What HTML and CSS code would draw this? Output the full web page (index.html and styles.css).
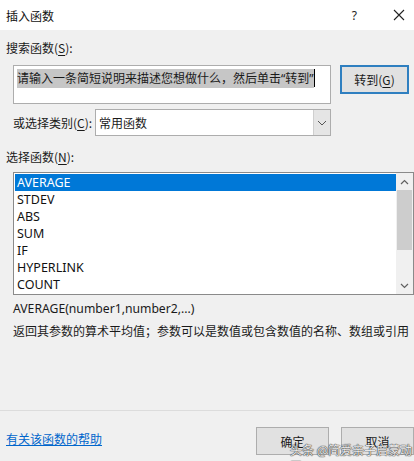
FILE: index.html
```html
<!DOCTYPE html>
<html lang="zh">
<head>
<meta charset="utf-8">
<link rel="stylesheet" href="styles.css">
</head>
<body>
<div class="dialog">
  <div class="titlebar">
    <span class="title">插入函数</span>
    <div class="title-btns">
      <span class="help">?</span>
      <svg class="close" width="12" height="12" viewBox="0 0 12 12"><path d="M1 1L11 11M11 1L1 11" stroke="#222" stroke-width="1.1" fill="none"/></svg>
    </div>
  </div>
  <div class="content">
    <div class="label first">搜索函数(<u>S</u>):</div>
    <div class="search-row">
      <div class="textbox"><span class="sel">请输入一条简短说明来描述您想做什么，然后单击<span class="q">“</span>转到<span class="q">”</span></span><span class="caret"></span></div>
      <div class="btn btn-focus">转到(<u>G</u>)</div>
    </div>
    <div class="cat-row">
      <span class="cat-label">或选择类别(<u>C</u>):</span>
      <div class="select">
        <span class="select-text">常用函数</span>
        <div class="drop"><svg width="10" height="6" viewBox="0 0 10 6"><path d="M1 1L5 5L9 1" stroke="#555" stroke-width="1" fill="none"/></svg></div>
      </div>
    </div>
    <div class="label pick">选择函数(<u>N</u>):</div>
    <div class="listbox">
      <ul class="items">
        <li class="selected">AVERAGE</li>
        <li>STDEV</li>
        <li>ABS</li>
        <li>SUM</li>
        <li>IF</li>
        <li>HYPERLINK</li>
        <li>COUNT</li>
      </ul>
      <div class="scrollbar">
        <svg class="arrow" width="9" height="6" viewBox="0 0 9 6"><path d="M1 5L4.5 1.5L8 5" stroke="#606060" stroke-width="1.2" fill="none"/></svg>
        <div class="track"><div class="thumb"></div></div>
        <svg class="arrow" width="9" height="6" viewBox="0 0 9 6"><path d="M1 1L4.5 4.5L8 1" stroke="#606060" stroke-width="1.2" fill="none"/></svg>
      </div>
    </div>
    <div class="sig">AVERAGE(number1,number2,...)</div>
    <div class="desc">返回其参数的算术平均值；参数可以是数值或包含数值的名称、数组或引用</div>
  </div>
  <div class="footer">
    <a class="link" href="#">有关该函数的帮助</a>
    <div class="footer-btns">
      <div class="btn btn-ok">确定</div>
      <div class="btn btn-cancel">取消</div>
    </div>
    <span class="watermark">头条 @简爱亲子启蒙动画</span>
  </div>
</div>
</body>
</html>
```

FILE: styles.css
```css
* { box-sizing: border-box; }
html, body { margin: 0; padding: 0; }
body {
  width: 414px;
  height: 461px;
  overflow: hidden;
  background: #f0f0f0;
  font-family: "Noto Sans", "Noto Sans CJK SC", sans-serif;
  font-size: 12px;
  color: #1a1a1a;
}
u { text-decoration: underline; text-underline-offset: 2px; }
.dialog {
  width: 414px;
  height: 461px;
  display: flex;
  flex-direction: column;
}
.titlebar {
  height: 30px;
  background: #ffffff;
  display: flex;
  align-items: center;
  justify-content: space-between;
  padding-left: 6px;
  padding-right: 9px;
}
.title { font-family: "Noto Sans CJK SC", sans-serif; font-size: 12px; color: #111; }
.title-btns { display: flex; align-items: center; gap: 36px; }
.help { font-size: 12px; color: #222; }
.close { display: block; }
.content {
  flex: 1;
  display: flex;
  flex-direction: column;
}
.label {
  font-family: "Noto Sans CJK SC", sans-serif;
  line-height: 17px;
  padding-left: 6px;
}
.label.first { margin-top: 9px; }
.search-row {
  display: flex;
  align-items: flex-start;
  margin-top: 9px;
  padding-left: 13px;
}
.textbox {
  width: 318px;
  height: 39px;
  background: #fff;
  border: 1px solid #adadad;
  padding: 3px 0 0 3px;
  font-family: "Noto Sans CJK SC", sans-serif;
  font-size: 12px;
  line-height: 18px;
  display: flex;
  align-items: flex-start;
  white-space: nowrap;
}
.sel { background: #c6c6c6; color: #1a1a1a; }
.q { font-family: "Noto Sans", sans-serif; }
.caret { width: 1px; height: 18px; background: #000; }
.btn {
  display: flex;
  align-items: center;
  justify-content: center;
  background: #e1e1e1;
  border: 1px solid #adadad;
  font-family: "Noto Sans CJK SC", sans-serif;
  font-size: 12px;
  color: #1a1a1a;
}
.btn-focus {
  width: 69px;
  height: 29px;
  margin-left: 9px;
  border: 2px solid #2f7fc0;
}
.cat-row {
  display: flex;
  align-items: center;
  margin-top: 5px;
  padding-left: 13px;
}
.cat-label {
  font-family: "Noto Sans CJK SC", sans-serif;
  width: 82px;
}
.select {
  width: 236px;
  height: 27px;
  background: #fff;
  border: 1px solid #adadad;
  display: flex;
  align-items: stretch;
}
.select-text {
  flex: 1;
  display: flex;
  align-items: center;
  padding-left: 3px;
  font-family: "Noto Sans CJK SC", sans-serif;
}
.drop {
  width: 17px;
  background: #e5e5e5;
  border-left: 1px solid #cfcfcf;
  display: flex;
  align-items: center;
  justify-content: center;
}
.label.pick { margin-top: 12px; }
.listbox {
  margin-top: 7px;
  margin-left: 13px;
  width: 401px;
  height: 123px;
  background: #fff;
  border: 1px solid #8a8a8a;
  display: flex;
  padding: 1px 0 0 1px;
}
.items {
  list-style: none;
  margin: 0;
  padding: 0;
  flex: 1;
}
.items li {
  height: 17px;
  line-height: 17px;
  padding-left: 2px;
  font-family: "Noto Sans", sans-serif;
  font-size: 12.5px;
  color: #111;
}
.items li.selected { background: #0078d7; color: #fff; }
.scrollbar {
  width: 17px;
  margin-top: -1px;
  background: #f0f0f0;
  display: flex;
  flex-direction: column;
  align-items: center;
}
.arrow { display: block; margin: 6px 0 5px; }
.track { flex: 1; width: 100%; display: flex; flex-direction: column; }
.thumb { width: 15px; margin-left: 1px; height: 60px; background: #cdcdcd; }
.sig {
  margin-top: 5px;
  padding-left: 13px;
  line-height: 17px;
  font-family: "Noto Sans", sans-serif;
  font-size: 12.2px;
}
.desc {
  margin-top: 5px;
  padding-left: 13px;
  line-height: 17px;
  font-family: "Noto Sans CJK SC", sans-serif;
  font-size: 12px;
  white-space: nowrap;
}
.footer {
  position: relative;
  height: 51px;
  border-top: 1px solid #dcdcdc;
  display: flex;
  align-items: flex-start;
  justify-content: space-between;
  padding-top: 16px;
  padding-left: 6px;
}
.link {
  font-family: "Noto Sans CJK SC", sans-serif;
  color: #0066cc;
  text-decoration: underline;
  margin-top: 3px;
}
.footer-btns { display: flex; gap: 12px; }
.btn-ok, .btn-cancel { width: 73px; height: 28px; }
.watermark {
  position: absolute;
  left: 290px;
  top: 31px;
  line-height: 16px;
  font-family: "Noto Sans CJK SC", sans-serif;
  font-size: 12px;
  color: rgba(255,255,255,0.9);
  text-shadow: 0 0 1px #444, 0 0 1px #444, 0 0 1px #444;
}
```
